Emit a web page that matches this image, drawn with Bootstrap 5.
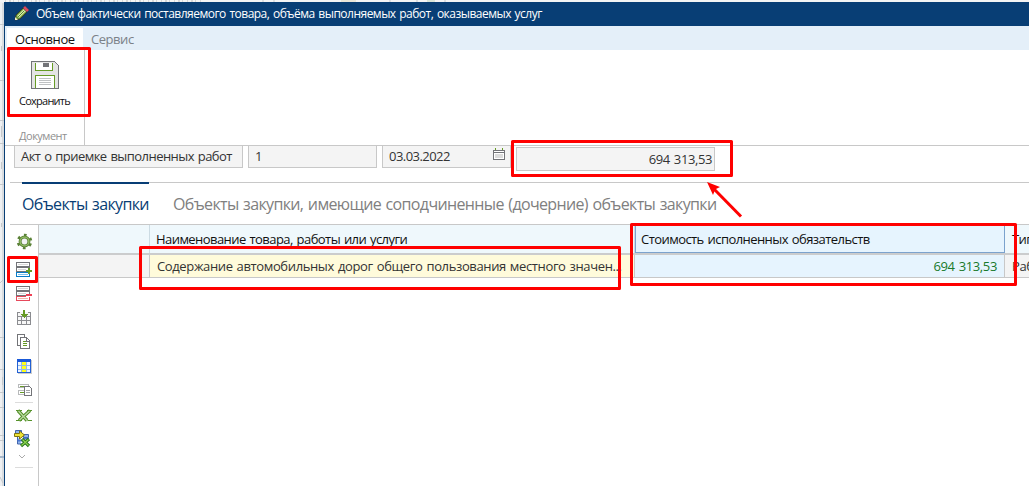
<!DOCTYPE html>
<html lang="ru">
<head>
<meta charset="utf-8">
<title>Объем фактически поставляемого товара</title>
<link href="https://cdn.jsdelivr.net/npm/bootstrap@5.3.0/dist/css/bootstrap.min.css" rel="stylesheet">
<style>
body{width:1029px;height:486px;overflow:hidden;background:#eef0f2;font-family:"Open Sans","Noto Sans",sans-serif;font-size:12px;color:#333;line-height:16px}
svg{display:block}
.scene{height:486px;padding:2px 0 0 4px}
.backdrop{left:0;top:0}
.dialog-box{height:484px;background:#fff;border-left:1px solid #083e75;word-spacing:1px}
.title-strip{height:24px;background:#083e75;color:#fff;padding-left:9px;letter-spacing:-.51px;white-space:nowrap}
.title-strip svg{margin-right:7px}
.ribbon-tabs{height:24px;background:#e4eff9;padding:2px 0 0 2px;letter-spacing:-.45px}
.ribbon-tabs div{height:22px;line-height:23px;font-size:13px;color:#7b8188;width:76px;padding-left:8px}
.ribbon-tabs .current{background:#fff;color:#111}
.ribbon{height:96px;border-bottom:1px solid #c8c8c8}
.ribbon-group{width:80px;border-right:1px solid #c8c8c8;font-size:11px;padding-top:11px;color:#111;letter-spacing:-.75px}
.ribbon-group svg{margin-left:26px}
.ribbon-group div{padding-left:14px}
.ribbon-group .group-name{color:#909090;margin-top:19px;letter-spacing:-.5px}
.fields{height:36px;padding-left:9px}
.field{height:22px;background:#f4f4f4;border:1px solid #c8c8c8;border-top:0;line-height:21px;padding-left:6px;font-size:13px;margin-right:5px;letter-spacing:-.55px;white-space:nowrap}
.field svg{margin:1px 5px 0 0}
.field.total{height:24px;margin-top:1px;border-top:1px solid #c8c8c8;line-height:23px;width:199px;padding-right:2px;letter-spacing:-.4px}
.page-tabs{height:43px;margin-left:5px;padding-left:12px;border-top:1px solid #c8c8c8;border-bottom:1px solid #c8c8c8;font-size:16px;color:#808080;letter-spacing:-.64px}
.page-tabs div{height:41px;line-height:42px;margin-right:24px}
.page-tabs .current{width:127px;margin-top:-1px;border-top:2px solid #083e75;color:#083e75;height:42px;line-height:41px}
.grid-area{height:261px;padding-left:5px}
.tools{width:29px;border-right:1px solid #c8c8c8}
.cells{height:28px;background:#eff8fc;color:#111;line-height:29px;font-size:13px;letter-spacing:-.56px}
.cells.data{height:22px;background:#f4f4f4;color:#333;line-height:23px;letter-spacing:-.37px}
.cells>div{border-right:1px solid #c8c8c8;white-space:nowrap;overflow:hidden}
.cells:not(.data)>div{border-right-color:#ccdbe3}
.c1{width:111px}.c2{width:485px;padding-left:6px}.c3{width:370px;padding-left:5px}.c4{width:40px;padding-left:7px}
.data .c2{padding-left:7px}
.cells:not(.data) .c3{background:#e6f4fe;border:1px solid #7ba2cd;border-top:0;height:28px}
.data .c2{background:#fffbdb}.data .c3{background:#e6f4fe;color:#197a2c;padding-right:7px}
.header-rule{height:2px;background:#cbcccd}
.row-rule{height:1px;background:#c8c8c8}
.marks{left:0;top:0;pointer-events:none}
</style>
</head>
<body>
<div class="scene position-relative">
<svg class="backdrop position-absolute" width="1029" height="486" viewBox="0 0 1029 486" fill="none" stroke="#c6c9cc">
<rect width="1029" height="2" fill="#f4f4f4" stroke="none"/><rect x="2" y="3" width="2" height="483" fill="#d9dcdf" stroke="none"/>
<path d="M5 1h196" stroke="#bbb" stroke-dasharray="1 3 2 2 1 4"/><path d="M263 0v2M274 0v2M390 0v2M417 0v2M445 0v2"/><path d="M341 1h15" stroke="#ddd6bd"/><path d="M427 1h8" stroke="#bfd6bd"/>
<path d="M0 24.5h4M0 80.5h4M0 120.5h4M0 143.5h4M0 184.5h4M0 337.5h4M0 369.5h4M0 392.5h4M0 407.5h4M0 435.5h4M0 440.5h4"/>
<path d="M0 457h4" stroke="#a6b7ca" stroke-width="2"/><path d="M1.500 46v5M1.500 126v11M1.500 162v7M1.500 223v4M2.500 377v8M0 283l3-3M0 477l3 6"/>
</svg>
<div class="dialog-box position-relative">
 <div class="title-strip d-flex align-items-center">
  <svg width="15" height="16" viewBox="0 0 15 16"><path d="M1 14l1-5 7-7 4 4-7 7z" fill="#6f9c36" stroke="#313b32"/><path d="M3 10l7-7 2 2-7 7" fill="#d9e9ac"/><path d="M3.500 11.500l7-7" stroke="#558c2c"/><path d="M9 2l2-2 4 4-2 2z" fill="#d94c61" stroke="#813447" stroke-width=".5"/><path d="M1 14v-3l3 3z" fill="#f4eecc"/></svg>
  <span>Объем фактически поставляемого товара, объёма выполняемых работ, оказываемых услуг</span>
 </div>
 <div class="ribbon-tabs d-flex"><div class="current">Основное</div><div>Сервис</div></div>
 <div class="ribbon d-flex">
  <div class="ribbon-group">
   <svg width="28" height="28" viewBox="0 0 28 28" shape-rendering="crispEdges"><path d="M.5.5h23l4 4v23H.5z" fill="#e4e4e4" stroke="#737478"/><path d="M4.500 2v7.500h17V2" fill="#fff" stroke="#669b25"/><path d="M12 2h6v4h-6z" fill="#737478"/><path d="M4.500 27V14.500h19V27" fill="#fff" stroke="#669b25"/><path d="M8 17.500h12M8 19.500h12M8 21.500h12M8 23.500h12" stroke="#bfc1c3"/><path d="M0 27.500h28" stroke="#737478"/></svg>
   <div class="mt-1">Сохранить</div><div class="group-name">Документ</div>
  </div>
 </div>
 <div class="fields d-flex">
  <div class="field" style="width:229px">Акт о приемке выполненных работ</div>
  <div class="field" style="width:129px">1</div>
  <div class="field d-flex justify-content-between" style="width:129px">03.03.2022
   <svg width="12" height="14" viewBox="0 0 12 14" shape-rendering="crispEdges"><path d="M.5 3.500h11v9H.5z" fill="#fff" stroke="#737478"/><path d="M0 5.500h12" stroke="#737478"/><path d="M2 7h8v4H2z" fill="#dcdcdc"/><path d="M2.500 1v2M9.500 1v2" stroke="#669b25"/></svg></div>
  <div class="field total text-end">694 313,53</div>
 </div>
 <div class="page-tabs d-flex"><div class="current text-nowrap">Объекты закупки</div><div class="text-nowrap">Объекты закупки, имеющие соподчиненные (дочерние) объекты закупки</div></div>
 <div class="grid-area d-flex"><div class="tools flex-shrink-0 d-flex flex-column align-items-start">
  <svg width="28" height="29" viewBox="10 225 28 29"><circle cx="24.500" cy="241.500" r="6.500" fill="none" stroke="#5b8237" stroke-width="2.600" stroke-dasharray="2.700 4.107" stroke-dashoffset="-2.050"/><circle cx="24.500" cy="241.500" r="4.400" fill="#f2f2f4" stroke="#5b8237" stroke-width="3"/><circle cx="24.500" cy="241.500" r="4.400" fill="none" stroke="#93bd66" stroke-width="1.300"/></svg>
  <svg width="28" height="28" viewBox="10 254 28 28" shape-rendering="crispEdges" fill="none"><path d="M16.500 262.500h13v4h-13zM26 271.500h-9.500v-4h13" stroke="#737478"/><path d="M18 264.500h10M18 269.500h8" stroke="#d8d8d8"/><path d="M16.500 272.500h13v4h-13z" fill="#fff" stroke="#087bc8"/><path d="M18 274.500h10" stroke="#7fc1ec"/><path d="M26 271h6M29 268v6" stroke="#669b25" stroke-width="2"/></svg>
  <svg width="28" height="24" viewBox="10 282 28 24" shape-rendering="crispEdges" fill="none"><path d="M16.500 286.500h13v4h-13zM26 295.500h-9.500v-4h13v2" stroke="#737478"/><path d="M18 288.500h10M18 293.500h8" stroke="#d8d8d8"/><path d="M29.500 297v3.500h-13v-4H26" stroke="#e6495b"/><path d="M18 298.500h10" stroke="#f4b4aa"/><path d="M26 295h6" stroke="#ef4055" stroke-width="2"/></svg>
  <svg width="28" height="24" viewBox="10 306 28 24" shape-rendering="crispEdges"><path d="M17.500 312.500h13v12h-13z" fill="#f7f7f7"/><path d="M21 312.500h-3.500v12h13v-12H27M17 316.500h14M17 320.500h14M21.500 316v8M26.500 316v8" stroke="#8b8c90" fill="none"/><path d="M20 312h8v4h-8z" fill="#f6f6f6"/><path d="M23 310h2v4h3l-4 4-4-4h3z" fill="#669b25"/></svg>
  <svg width="28" height="24" viewBox="10 330 28 24" shape-rendering="crispEdges" fill="#fff" stroke="#737478"><path d="M17.500 334.500h7v11h-7z"/><path d="M20.500 337.500h6l3 3v8h-9z"/><path d="M26.500 338v3h3" fill="none"/><path d="M23 341.500h3M23 343.500h4M23 345.500h4" stroke="#669b25"/></svg>
  <svg width="28" height="24" viewBox="10 354 28 24" shape-rendering="crispEdges"><path d="M18 360h14v14H18z" fill="#ccc"/><path d="M17.500 359.500h13v13h-13z" fill="#eef5ff" stroke="#2462d3"/><path d="M21 362h6v10h-6z" fill="#ffff18"/><path d="M18 365.500h12M18 369.500h12M21.500 362v10M26.500 362v10" stroke="#8eb8ed"/><path d="M17 359h14v3H17z" fill="#1959d8"/></svg>
  <svg width="28" height="22" viewBox="10 378 28 22" shape-rendering="crispEdges"><path d="M18.500 384.500h10v3h-10zM18.500 390.500h9v4h-9z" fill="#fff" stroke="#b8babb"/><path d="M20 386.500h6M20 392.500h4" stroke="#669b25"/><path d="M24.500 386.500h5l2 2v7h-7z" fill="#fff" stroke="#737478"/><path d="M26 390.500h4M26 392.500h4" stroke="#a5a7aa"/></svg>
  <svg width="28" height="5" viewBox="10 400 28 5" shape-rendering="crispEdges"><path d="M15 402.500h18" stroke="#dcdcdc"/></svg>
  <svg width="28" height="21" viewBox="10 405 28 21"><path d="M18 410.500l9 10M30 410.500l-11 10" stroke="#56922b" stroke-width="3.400"/><path d="M16 410.500h6M27 410.500h5M16 420.500h6M25 420.500h7" stroke="#56922b"/><path d="M18.500 411l9 10M29.500 411l-10 9" stroke="#b9d8a3" stroke-width="1.200"/></svg>
  <svg width="28" height="24" viewBox="10 426 28 24"><path d="M15.500 430.500h6v3h-6zM23.500 434.500h5v3h-5zM17.500 436v8h4" fill="#91b5ec" stroke="#4165ac"/><path d="M23 438.500h6M17.500 440.500h5" stroke="#4876d0" stroke-width="2"/><path d="M22 439l7 7M29 439l-8 7" stroke="#27731c" stroke-width="3.200"/><path d="M22.500 439.500l6 6M28.500 439.500l-7 6" stroke="#8ed34f" stroke-width="1.200"/><path d="M14.500 433.500h5v-2.500l5 4-5 4v-2.500h-5z" fill="#eee434" stroke="#7d7411"/></svg>
  <svg width="28" height="14" viewBox="10 450 28 14"><path d="M19 455l3 3 3-3" fill="none" stroke="#aaa"/></svg>
  <svg width="28" height="6" viewBox="10 464 28 6" shape-rendering="crispEdges"><path d="M15 467.500h18" stroke="#dcdcdc"/></svg>
 </div>
 <div class="flex-grow-1 overflow-hidden">
  <div class="cells d-flex"><div class="c1 flex-shrink-0"></div><div class="c2 flex-shrink-0">Наименование товара, работы или услуги</div><div class="c3 flex-shrink-0">Стоимость исполненных обязательств</div><div class="c4 flex-shrink-0">Тип</div></div>
  <div class="header-rule"></div>
  <div class="cells data d-flex"><div class="c1 flex-shrink-0"></div><div class="c2 flex-shrink-0">Содержание автомобильных дорог общего пользования местного значен...</div><div class="c3 flex-shrink-0 text-end">694 313,53</div><div class="c4 flex-shrink-0">Работа</div></div>
  <div class="row-rule"></div>
 </div></div>
</div>
<svg class="marks position-absolute" width="1029" height="486" fill="none" stroke="#f00" stroke-width="3" stroke-linejoin="round"><rect x="8.500" y="48.500" width="81" height="67"/><rect x="8.500" y="257.500" width="28" height="24"/><rect x="140.500" y="247.500" width="479" height="41"/><rect x="512.500" y="141.500" width="219" height="34"/><rect x="631.500" y="224.500" width="384" height="60"/><path d="M714 189l27 27.500"/><path d="M707 182l13 5-4 2-1 1-2 5z" fill="#f00" stroke="none"/></svg>
</div>
<script src="https://cdn.jsdelivr.net/npm/bootstrap@5.3.0/dist/js/bootstrap.bundle.min.js"></script>
</body>
</html>
